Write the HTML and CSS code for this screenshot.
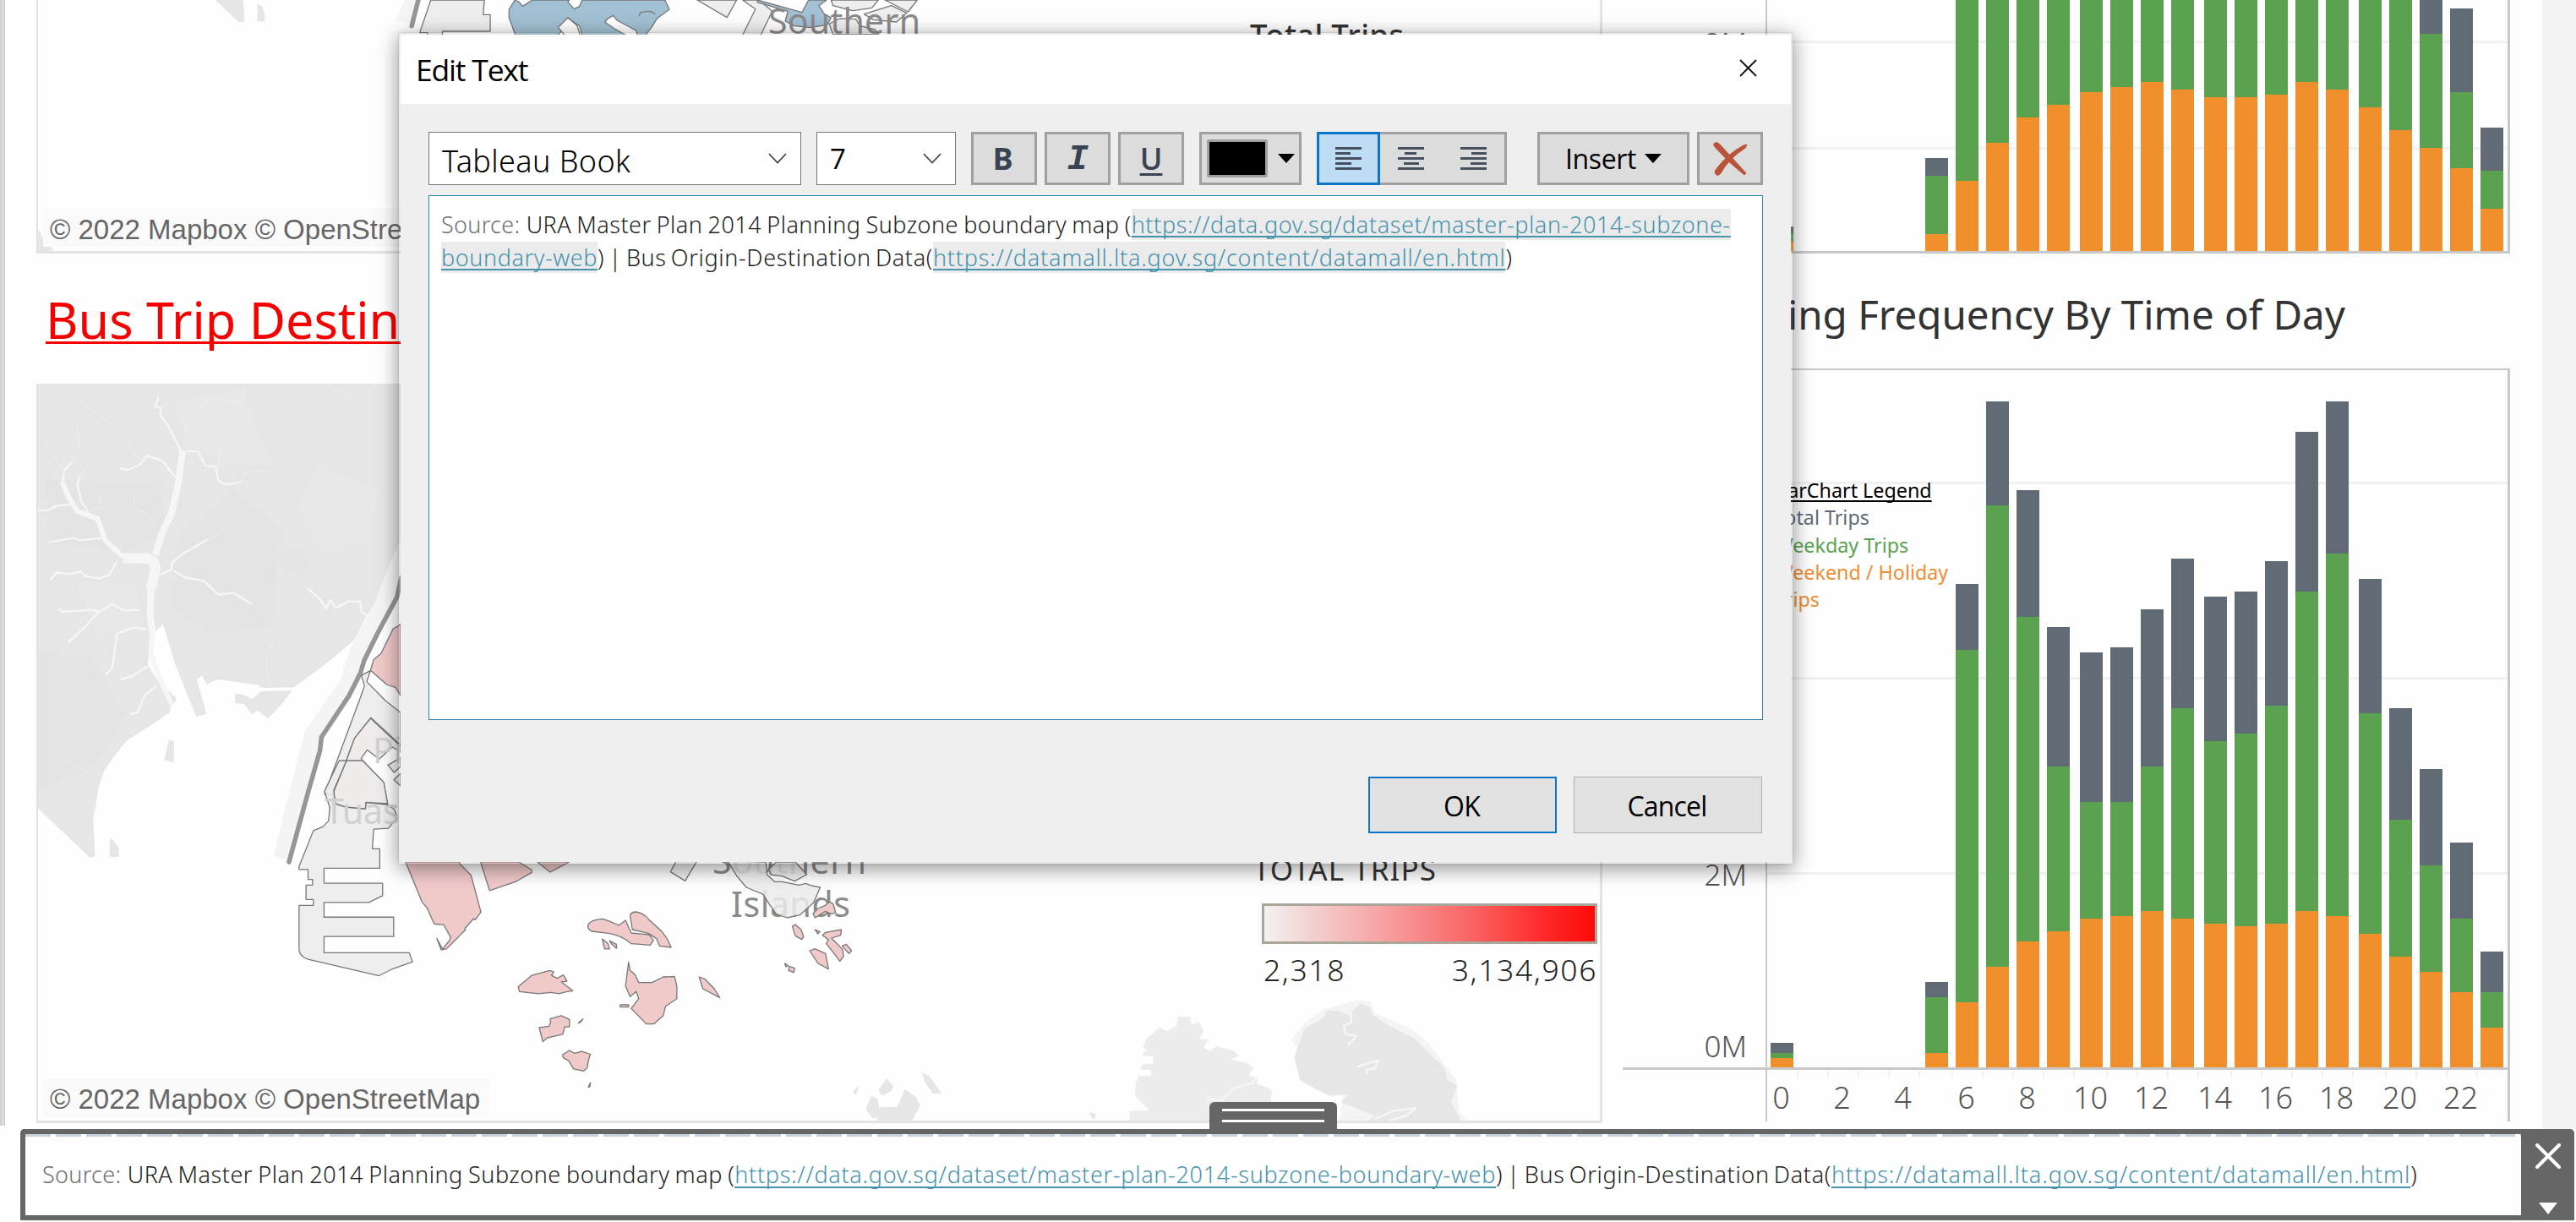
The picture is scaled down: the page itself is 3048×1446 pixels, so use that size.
FILE: index.html
```html
<!DOCTYPE html>
<html lang="en">
<head>
<meta charset="utf-8">
<title>Edit Text</title>
<link rel="stylesheet" href="styles.css">
</head>
<body>
<div class="app">
  <main class="dashboard">
    <div class="edge"></div>
    <section class="maps">
      <div class="map map-origin">
        <svg class="map-canvas" viewBox="45 0 1848 297" preserveAspectRatio="none">
          <g class="z" transform="scale(.48474 .33333)">
            <path class="land" d="M526 0H594L597 78L582 77ZM628 14L640 22L646 50V76H628Z"/>
            <path class="band" d="M988 0L965 72L1003 85L1025 0Z"/>
            <path class="causeway" d="M1021 0L1005 92"/>
            <path class="land" d="M91 818L98 822L105 850V875H125L130 887L120 892H91Z"/>
          </g>
          <g class="z" transform="translate(450 0) scale(.7653 .33333)">
            <path class="zone gray" d="M78 0L61 116H73V125H96V111H170V52H159L161 0Z"/>
            <path class="zone blue" d="M208 0L199 34V62L209 125H275L285 95L290 63L308 92L312 125H410L420 95L428 65L447 33L440 0H312L308 22L300 32L290 8L292 0H235L220 22L214 6Z"/>
            <path class="zone white" d="M290 63L275 97L285 125H309L304 90ZM347 78L352 66L360 55L366 72L395 108L398 125H380L362 102Z"/>
            <path class="zone line" d="M400 58L402 45L412 40L420 42L425 50"/>
            <path class="zone gray" d="M490 0L536 62L551 0ZM560 0L580 32L560 125H588L606 40L585 0Z"/>
            <path class="zone blue" d="M583 0L652 44L662 0H690L678 20L686 48L697 63L691 88L665 98L640 92L626 75L630 40L583 8Z"/>
            <path class="zone gray" d="M697 0L700 20L730 38L760 28L770 0ZM780 0L816 42L830 0ZM790 20L748 50L762 70L798 78L814 46ZM694 85L710 66L735 68L742 92L765 105L770 122H700Z"/>
          </g>
          <text class="place" x="909" y="40" textLength="180">Southern</text>
          <text class="place-title" x="1479" y="55" textLength="182">Total Trips</text>
        </svg>
        <div class="credit">© 2022 Mapbox © OpenStreetMap</div>
      </div>
      <h2 class="map-title">Bus Trip Destination</h2>
      <div class="map map-destination">
        <svg class="map-canvas" viewBox="45 454 1848 872" preserveAspectRatio="none">
          <g class="z" transform="translate(0 440) scale(.44643 .33333)">
            <path class="land" d="M94 42H1062V600L1040 660L990 830L970 870L940 950L880 1020L780 1120L700 1122L600 1095L575 1093L548 1110L535 1080L522 1092L548 1215L520 1225L455 1175L450 1210L400 1255L335 1310L297 1375L275 1420L262 1470L247 1589L252 1720L239 1725L94 1542Z"/>
            <path class="land-dark" d="M120 380L420 400L440 560L330 640L130 600ZM620 420L740 560L720 900L560 930L460 840L470 600ZM94 1000L240 1010L330 1220L250 1400L94 1480ZM740 640H800L820 690L770 710L735 680Z"/>
            <path class="land-light" d="M460 100L640 60L720 330L600 330L500 260ZM840 330L1000 420L980 600L850 640L790 480ZM200 740L360 760L380 900L260 940Z"/>
            <path class="sea" d="M400 940L432 895L462 1030L520 1225L548 1215L522 1092L535 1080L548 1110L575 1093L688 1112L682 1140L668 1162L645 1145L623 1142V1178L648 1180L668 1216L682 1200L710 1230L740 1190L775 1130L880 1020L920 975L880 1180L780 1500H300L300 1375L340 1310L450 1210L468 1160L415 1090L392 1040Z"/>
            <path class="land" d="M700 1134L775 1130L740 1190L710 1230L682 1202L668 1216L648 1180L623 1176V1142L645 1145L668 1162L690 1136ZM447 1307L461 1310V1386L435 1378ZM291 1652L302 1665L315 1692V1722H291Z"/>
            <g class="river">
              <path class="r20" d="M484 280L472 400L455 500L430 570L412 650M400 760L398 860L405 940"/>
              <path class="r28" d="M325 662H385Q412 665 412 700L400 770"/>
              <path class="r12" d="M405 900L400 1000L420 1080L455 1180M325 655L280 600L258 520L205 495L180 440L165 390"/>
              <path class="r6" d="M480 280L445 190L425 155L428 130L412 122L420 90M495 280L525 283L545 335H572L578 385L595 400L640 392M465 375L430 315L390 298L370 330L340 348L318 342M165 390L170 350L192 320M235 500L215 460L205 400L212 370M310 672L290 720L265 733L225 725L215 708L185 718L150 712L135 738M270 590L210 598L195 590L130 605M190 470L150 475L130 490L100 492M425 720L455 700V680L480 650L550 595M460 705L490 730L540 742L578 790L620 785L668 824M370 845L330 848L298 825L262 852L245 845L165 852L155 840M262 852L220 912L180 962M390 915L355 908L310 930L298 1050L280 1075M392 1045L350 1080L315 1094M415 1115L382 1150L365 1210L345 1215M818 770L850 810L865 840L875 810L890 838L925 815H955L958 850L975 868"/>
              <path class="r2" d="M428 50L418 90M165 50L215 110L300 190L345 260L360 305M490 270L495 230L488 205L505 160L530 130L560 92L630 108L648 85V50M640 390L650 360L690 350L755 363M580 345L582 270M192 320L210 260L205 195M212 370L238 320M170 350L130 280L110 230M355 430V480L390 510L425 555M745 890L735 930L710 990L705 1040L715 1115M866 50L915 85H940L1003 50M550 595L580 580M165 1375L200 1400L265 1430M245 490L285 480M270 470L260 440"/>
            </g>
            <path class="band" d="M1062 600L1040 660L990 830L930 975L900 1100L810 1270L765 1500L725 1720L762 1735L815 1500L852 1297L925 1150L1000 930L1062 740Z"/>
            <path class="causeway" d="M1064 730L1052 800L1000 930L965 1025L955 1070L925 1150L852 1297L848 1345L815 1500L766 1740"/>
            <path class="zone gray" d="M966 1115L957 1150L860 1500L884 1502L940 1300L983 1228L1062 1325V1210L1022 1168L972 1100L982 1060L958 1078Z"/>
            <path class="zone pale" d="M982 1230L940 1300L885 1500L878 1530L890 1540L970 1550L966 1532L1028 1534L1016 1458L957 1373L973 1342L1005 1375L1040 1332L1062 1350V1330Z"/>
            <path class="zone pink" d="M1062 895L1052 905L1042 912L1010 1000L990 1022L982 1060L1025 1110L1048 1120L1062 1150Z"/>
            <path class="zone gray" d="M1062 1370L1028 1396L1045 1422L1062 1400ZM1062 1425L1044 1448L1062 1470Z"/>
          </g>
          <text class="place faint" x="441" y="903">Pioneer</text>
          <g class="z" transform="translate(0 900) scale(.48474 .3482)">
            <path class="zone gray" d="M828 0L792 104L805 160L802 205L788 225L765 238L730 360V370H752V404H763V423H747V472H765V492H730V645Q734 668 752 675L925 731L955 710L1007 684L999 653H791V598H961V532H791V482H900L934 459V417H791V366H927V300H909L912 233L948 230L966 200L968 185L962 165L946 150L893 142L892 164L845 158L819 146L815 100L846 0Z"/>
            <path class="zone pale" d="M846 0L815 105L819 146L845 158L892 164L893 142L946 146L937 74L885 0Z"/>
            <path class="zone pink" d="M990 344L1030 480L1042 500L1060 555L1083 558L1100 600L1097 612L1080 640L1066 604L1077 643L1090 640L1136 575L1135 570L1156 537L1160 541L1174 515L1150 390L1122 350V344ZM1173 344L1195 442L1258 412L1298 380V372L1266 344ZM1311 344L1343 379L1390 344Z"/>
            <path class="zone pink" d="M1265 768L1298 730L1342 713L1352 718L1346 730L1360 740L1375 728L1384 750L1370 752L1385 768L1398 782L1382 786L1365 792L1345 788L1314 792L1268 785ZM1343 878L1370 867L1390 880V905L1378 905L1374 930L1358 935L1336 942L1325 955L1316 907L1340 903L1344 890ZM1373 1000L1390 985L1403 995L1420 988L1441 998L1437 1015L1433 1045L1425 1055L1400 1048L1388 1020L1375 1010ZM1412 892L1423 878L1418 888ZM1436 1110L1441 1095L1440 1108Z"/>
            <path class="zone pink" d="M1470 606L1484 622L1488 640H1476ZM1488 612L1505 625V638L1492 622Z"/>
          </g>
          <text class="place faint" x="384" y="975">Tuas</text>
          <text class="place" x="843" y="1034" textLength="182">Southern</text>
          <text class="place" x="865" y="1085" textLength="141">Islands</text>
          <g class="z" transform="translate(700 980) scale(.44643 .33333)">
            <path class="zone gray" d="M225 115L209 155L248 187L280 115ZM470 145L490 120H540L570 165L538 188L505 170L475 165Z"/>
            <path class="zone gray" d="M360 115L385 170L410 210L455 235L470 268L490 305L518 318L552 308L588 265L606 210L580 203L568 196L550 202L505 190H485L465 165L462 120Z"/>
            <path class="zone pink" d="M587 303L600 285L618 275L630 262L640 268L647 300L635 305L620 295L592 318ZM-10 345Q-5 325 30 322Q50 330 72 345L90 327L105 372L152 378L164 398L155 415L105 410Q80 380 45 373L0 366Q-10 360 -10 345ZM102 310Q105 297 118 297Q140 302 152 325L185 365L200 392L211 423L180 418L172 392L150 373L108 360Z"/>
            <path class="zone pink" d="M98 475L102 505L115 520L125 548L160 548L190 528L220 527L226 560V605L196 632L190 665L165 695H145L105 640L125 605L118 580L102 598L90 560ZM285 528L300 535L325 570L340 602L295 570ZM76 627H98V635H76ZM532 348L540 342L555 360L562 385L557 395L540 382ZM592 360L605 367L600 375ZM612 380L620 370L662 360L660 380L636 390L665 430L668 455L658 472L640 440L622 410L628 396ZM578 435L592 428L620 445L628 500L600 480ZM664 418L675 412L689 435L682 445ZM512 480L521 488L515 492ZM524 490L538 497L536 512L522 505Z"/>
            <path class="land" d="M692 935L710 912L700 948ZM740 950L758 960L765 1022L745 1030L727 1000ZM782 888L800 915L795 932L770 950L760 930ZM830 926L860 955L871 985L850 1037H755L765 990H810ZM875 868L895 880L928 942L905 943L885 905ZM1318 1008L1338 1015L1330 1036Z"/>
          </g>
          <g class="z" transform="translate(1300 880) scale(.5357 .3623)">
            <path class="land soft" d="M68 1236V1200L112 1198L80 1150L82 1110L88 1085L116 1084L115 1066L92 1064L98 1046L120 1045L121 1022L98 1020V1006L108 1004L98 990L105 965L135 926L150 940L172 922L175 892H202L205 918L222 908L232 940L222 965L243 966L232 990L245 1005L260 988L300 1005L310 1020L292 1030L330 1045L342 1060L330 1085L350 1090V1110L383 1130L380 1170L350 1236Z"/>
            <path class="band" d="M425 970L455 910L495 870L570 838L600 842L610 880L690 930L730 980L765 1050L790 1100L795 1200L820 1236H530L540 1150Z"/>
            <path class="land" d="M432 1025L455 930L500 892L505 870L530 872L558 890L562 870L578 848L600 862L605 885L640 920L700 965L735 1020L765 1060L770 1100L792 1115L778 1170L802 1236H595L610 1215L535 1170L553 1145L510 1150L475 1125L445 1100Z"/>
            <g class="river"><path class="r6" d="M558 885V910L542 920L545 950L570 955L550 985M570 1055L600 1042L618 1035L610 1060L590 1065L595 1080M610 1225L650 1200L700 1190L680 1215L640 1232M352 1080L340 1108L300 1125L272 1165L240 1160"/></g>
          </g>
          <text class="legend-title" x="1483" y="1042" textLength="216">TOTAL TRIPS</text>
        </svg>
        <div class="ramp">
          <div class="ramp-bar"></div>
          <div class="ramp-range"><span>2,318</span><span>3,134,906</span></div>
        </div>
        <div class="credit">© 2022 Mapbox © OpenStreetMap</div>
      </div>
    </section>
    <section class="charts">
      <div class="chart chart-top">
        <div class="axis-y"><span class="tick-2m">2M</span></div>
        <div class="plot" id="plot-boarding"></div>
      </div>
      <h2 class="chart-title">Alighting Frequency By Time of Day</h2>
      <div class="chart chart-bottom">
        <div class="axis-y"><span class="tick-2m">2M</span><span class="tick-0m">0M</span></div>
        <div class="plot" id="plot-alighting"></div>
      </div>
      <div class="axis-x" id="hours"></div>
      <div class="bar-legend">
        <div class="head">BarChart Legend</div>
        <div class="total">Total Trips</div>
        <div class="weekday">Weekday Trips</div>
        <div class="weekend">Weekend / Holiday<br>Trips</div>
      </div>
    </section>
    <div class="gutter"></div>
  </main>

  <footer class="source-panel">
    <div class="grip"><i></i><i></i></div>
    <p class="source"><span class="label">Source: </span><span class="s1">URA Master Plan 2014 Planning Subzone boundary map (</span><a class="s2">https://data.gov.sg/dataset/master-plan-2014-subzone-boundary-web</a><span class="s3">) | Bus Origin-Destination Data(</span><a class="s4">https://datamall.lta.gov.sg/content/datamall/en.html</a>)</p>
    <div class="panel-actions">
      <svg width="32" height="30" viewBox="0 0 32 30"><path d="M3 2L29 28M29 2L3 28" stroke="#fff" stroke-width="4" stroke-linecap="round"/></svg>
      <svg width="22" height="14" viewBox="0 0 22 14"><path d="M0 0H22L11 14Z" fill="#fff"/></svg>
    </div>
  </footer>

  <div class="dialog">
    <header class="dialog-bar">
      <span>Edit Text</span>
      <svg width="21" height="21" viewBox="0 0 21 21"><path d="M1 1L20 20M20 1L1 20" stroke="#111" stroke-width="1.8"/></svg>
    </header>
    <div class="dialog-body">
      <div class="toolbar">
        <div class="select font">Tableau Book<svg width="22" height="13" viewBox="0 0 22 13"><path d="M1 1L11 11.5L21 1" fill="none" stroke="#444" stroke-width="1.8"/></svg></div>
        <div class="select size">7<svg width="22" height="13" viewBox="0 0 22 13"><path d="M1 1L11 11.5L21 1" fill="none" stroke="#444" stroke-width="1.8"/></svg></div>
        <button class="tool bold">B</button>
        <button class="tool italic">I</button>
        <button class="tool under">U</button>
        <button class="tool color"><i class="swatch"></i><i class="caret"></i></button>
        <div class="align">
          <button class="on"><svg width="31" height="27" viewBox="0 0 31 27"><path d="M0 1.5H31M0 7.5H18M0 13.5H31M0 19.5H19M0 25.5H31"/></svg></button>
          <button><svg width="31" height="27" viewBox="0 0 31 27"><path d="M0 1.5H31M8 7.5H22M0 13.5H31M7 19.5H25M0 25.5H31"/></svg></button>
          <button><svg width="31" height="27" viewBox="0 0 31 27"><path d="M0 1.5H31M13 7.5H31M0 13.5H31M12 19.5H31M0 25.5H31"/></svg></button>
        </div>
        <button class="tool insert">Insert<i class="caret"></i></button>
        <button class="tool clear"><svg width="41" height="40" viewBox="0 0 41 40"><path d="M1 2Q4-1 8 3Q22 18 39 37L37 39Q18 24 3 7Q0 4 1 2ZM40 3L38 7Q18 20 9 37Q6 41 3 38Q1 36 3 33Q17 14 36 4Z" fill="#b9543a" stroke="#b9543a" stroke-width="1"/></svg></button>
      </div>
      <div class="editor"><p class="source"><span class="label">Source: </span><span class="s1">URA Master Plan 2014 Planning Subzone boundary map (</span><a class="s2">https://data.gov.sg/dataset/master-plan-2014-subzone-</a><br><a class="s2">boundary-web</a><span class="s3">) | Bus Origin-Destination Data(</span><a class="s4">https://datamall.lta.gov.sg/content/datamall/en.html</a>)</p></div>
      <div class="dialog-actions"><button class="ok">OK</button><button class="cancel">Cancel</button></div>
    </div>
  </div>
</div>
<script src="charts.js"></script>
</body>
</html>
```
FILE: styles.css
```css
* { box-sizing: border-box; }
body { margin: 0; background: #fefefe; font-family: "Noto Sans", sans-serif; color: #333; }
h2, p { margin: 0; font-weight: 400; }
button { font: inherit; color: inherit; padding: 0; margin: 0; }
.app { position: relative; width: 3048px; height: 1446px; overflow: hidden; }

/* dashboard */
.dashboard { display: flex; height: 1336px; }
.edge { width: 6px; height: 1332px; background: linear-gradient(90deg, #d2d2d2 3px, #ececec 3px 4px, #cfcfcf 4px); }
.maps { width: 1853px; margin-left: 37px; }
.map { position: relative; border: solid #e3e3e3; border-width: 0 3px 3px 2px; overflow: hidden; }
.map-origin { height: 300px; }
.map-destination { height: 875px; }
.map-canvas { display: block; width: 100%; height: 100%; }
.map-title { height: 154px; padding: 17px 0 0 11px; font-size: 59.3px; line-height: 122px; color: #f60000; white-space: nowrap; text-decoration: underline 3px; text-underline-offset: 3px; text-decoration-skip-ink: none; }
.credit { position: absolute; left: 6px; bottom: 5px; width: 528px; height: 45px; padding-left: 8px; background: #fafafa; font: 33px/49px "Liberation Sans", sans-serif; color: #666; white-space: nowrap; }
.z path { vector-effect: non-scaling-stroke; }
.land { fill: #e6e6e6; }
.land-dark { fill: #e4e4e4; }
.land-light { fill: #e8e8e8; }
.land.soft { fill: #ececec; }
.sea { fill: #fefefe; }
.band { fill: #f4f4f4; }
.causeway { fill: none; stroke: #969696; stroke-width: 5.5; stroke-linecap: round; stroke-linejoin: round; }
.river path { fill: none; stroke: #f6f6f6; stroke-linejoin: round; }
.r28 { stroke-width: 12; } .r20 { stroke-width: 8; } .r12 { stroke-width: 6; } .river .r6 { stroke-width: 2.4; } .river .r2 { stroke-width: 1; stroke: #efefef; }
.zone { stroke: #777; stroke-width: 1.3; stroke-linejoin: round; }
.line { fill: none; }
.gray { fill: #ebebeb; fill-opacity: .85; }
.white { fill: #fff; }
.pale { fill: #efebeb; }
.pink { fill: #f0c9c9; }
.blue { fill: #a1c0d3; }
.place { font-size: 41px; fill: #8a8a8a; }
.faint { fill: #d2cfd0; }
.place-title { font-size: 36.5px; font-weight: 500; fill: #333; }
.legend-title { font-size: 35px; fill: #333; }
.ramp { position: absolute; left: 1448px; top: 615px; width: 397px; }
.ramp-bar { height: 48px; border: 3px solid #aaa799; background: linear-gradient(90deg, #f4f2f2, #f3cfcf 15%, #f79d9d 38%, #fa6565 62%, #ff2a2a 84%, #ff0a0a); }
.ramp-range { display: flex; justify-content: space-between; padding: 0 2px; font-size: 35.5px; font-weight: 300; line-height: 60px; letter-spacing: 1.6px; margin-right: -2px; color: #222; }

/* charts */
.charts { position: relative; width: 1050px; margin-left: 24px; }
.chart { display: flex; }
.chart-top { height: 300px; }
.chart-bottom { height: 830px; }
.axis-y { width: 169px; padding-right: 22px; display: flex; flex-direction: column; align-items: flex-end; font-size: 35px; font-weight: 300; line-height: 48px; color: #555; }
.chart-top .tick-2m { margin-top: 27px; }
.chart-bottom .tick-2m { margin-top: 575px; }
.chart-bottom .tick-0m { margin-top: 155px; }
.chart-bottom .axis-y { border-bottom: 3px solid #c8c8c8; }
.plot { width: 881px; display: flex; align-items: flex-end; border: solid #c8c8c8; border-width: 0 3px 3px 2px; background-repeat: no-repeat; }
.chart-top .plot { background-image: linear-gradient(#f1f1f1, #f1f1f1), linear-gradient(#f1f1f1, #f1f1f1); background-size: 100% 3px; background-position: 0 48px, 0 174px; }
.chart-bottom .plot { border-top-width: 2px; background-image: linear-gradient(#f1f1f1, #f1f1f1), linear-gradient(#f1f1f1, #f1f1f1), linear-gradient(#f1f1f1, #f1f1f1); background-size: 100% 3px; background-position: 0 132px, 0 363px, 0 594px; }
.hour { flex: none; width: 36px; padding-left: 4px; }
.hour.wide { width: 39px; padding-left: 7px; }
.seg { width: 27px; }
.total-seg { background: #616b75; }
.weekday-seg { background: #5aa250; }
.weekend-seg { background: #f28f2d; }
.chart-title { height: 136px; padding-top: 40px; font-size: 47.5px; line-height: 64px; text-align: right; padding-right: 195px; white-space: nowrap; }
.axis-x { display: flex; margin-left: 169px; height: 61px; width: 881px; border: solid #c8c8c8; border-width: 0 3px 0 2px; font-size: 36px; font-weight: 300; color: #555; }
.slot { flex: none; width: 36px; display: flex; justify-content: center; line-height: 49px; padding: 8px 3px 0 0; position: relative; }
.slot.wide { width: 39px; padding-right: 0; }
.slot::after { content: ""; position: absolute; right: -1px; top: 1px; width: 2px; height: 9px; background: #f1f1f1; }
.slot:last-child::after { display: none; }
.bar-legend { position: absolute; left: 180px; top: 564px; font-size: 23.3px; line-height: 32.3px; white-space: nowrap; }
.head { color: #000; text-decoration: underline 1.5px; text-underline-offset: 3px; text-decoration-skip-ink: none; }
.total { color: #616b75; }
.weekday { color: #5aa250; }
.weekend { color: #ee8d33; }
.gutter { margin-left: auto; width: 40px; background: #f3f3f3; }

/* source zone */
.source-panel { position: relative; display: flex; justify-content: space-between; width: 3022px; height: 108px; margin-left: 24px; border: 6px solid #666; border-width: 6px 0 6px 6px; border-radius: 5px 5px 0 0; background: repeating-linear-gradient(90deg, #c8cfdd 0 30px, #fff 30px 36px) 0 0 / 100% 3px no-repeat, #fefefe; }
.grip { position: absolute; left: 1401px; top: -38px; width: 151px; height: 33px; padding: 8px 15px; display: grid; gap: 9px; border-radius: 6px 6px 0 0; background: #666; }
.grip i { height: 3px; background: #fff; }
.source { font-size: 27px; font-weight: 300; white-space: nowrap; color: #222; }
.source-panel .source { padding-left: 20px; line-height: 95px; }
.label { color: #707070; letter-spacing: .3px; }
.s1 { letter-spacing: .5px; word-spacing: -1.2px; } .s2 { letter-spacing: .7px; } .s3 { letter-spacing: .65px; word-spacing: -2.5px; } .s4 { letter-spacing: .93px; }
.source a { color: #4793ae; text-decoration: underline 1.5px; text-underline-offset: 4px; text-decoration-skip-ink: none; }
.panel-actions { width: 63px; margin-bottom: -6px; padding: 11px 0 7px; display: flex; flex-direction: column; align-items: center; justify-content: space-between; background: #666; }

/* dialog */
.dialog { position: absolute; left: 471px; top: 38px; width: 1651px; height: 985px; display: flex; flex-direction: column; border: 3px solid rgba(130,130,130,.15); background: #efefef; background-clip: padding-box; box-shadow: 0 5px 22px rgba(0,0,0,.42); font-family: "Open Sans", sans-serif; color: #000; }
.dialog-bar { height: 82px; padding: 0 40px 0 18px; display: flex; align-items: center; justify-content: space-between; background: #fff; font-size: 35.5px; letter-spacing: -1.2px; }
.dialog-bar svg { margin-top: -4px; }
.dialog-body { flex: 1; padding: 33px 33px 0; }
.toolbar { display: flex; height: 63px; }
.select { display: flex; align-items: center; justify-content: space-between; height: 63px; border: 1.5px solid #777; background: #fff; padding: 0 16px 0 15px; font-size: 36px; }
.font { width: 441px; font-family: "Noto Sans", sans-serif; font-weight: 300; letter-spacing: .4px; padding-top: 6px; }
.font svg { margin-top: -6px; }
.size { width: 165px; margin-left: 18px; font-size: 33px; }
.tool { display: flex; align-items: center; justify-content: center; width: 78px; margin-left: 9px; border: 3px solid #a0a0a0; background: #dcdcdc; color: #3a4352; font-weight: 700; font-size: 36px; }
.bold { margin-left: 18px; padding-right: 3px; }
.italic { font-family: "Liberation Mono", monospace; font-style: italic; font-size: 42px; padding-top: 3px; }
.under { font-weight: 600; text-decoration: underline 3px; text-underline-offset: 4px; }
.color { width: 121px; margin-left: 18px; justify-content: space-between; padding: 0 5px 0 6px; }
.swatch { width: 72px; height: 45px; border: 3px solid #a0a0a0; border-radius: 2px; background: #000; }
.caret { width: 20px; height: 11px; background: #000; clip-path: polygon(0 0, 100% 0, 50% 100%); }
.align { display: flex; width: 225px; margin-left: 18px; background: #dcdcdc; border: 3px solid #a0a0a0; border-left: 0; }
.align button { flex: 1; border: 0; background: none; display: flex; align-items: center; justify-content: center; }
.align .on { flex: none; width: 75px; margin: -3px 0; border: 3px solid #0b76c8; background: #bedcf4; }
.align path { stroke: #47505f; stroke-width: 3; }
.insert { width: 180px; margin-left: 36px; gap: 10px; font-size: 32px; font-weight: 400; letter-spacing: -.4px; color: #000; }
.editor { height: 621px; margin-top: 12px; padding: 14px 14px; border: 1.5px solid #2f83b2; background: #fff; font-family: "Noto Sans", sans-serif; }
.editor .source { line-height: 39px; }
.editor .source a { background: #ebebeb; text-decoration-thickness: 2px; text-underline-offset: 3px; }
.editor .s1 { letter-spacing: .45px; }
.editor .s2 { letter-spacing: .6px; }
.editor .s4 { letter-spacing: .78px; }
.dialog-actions { display: flex; justify-content: flex-end; gap: 20px; margin: 67px 1px 0 0; }
.dialog-actions button { width: 223px; height: 67px; font-size: 32px; letter-spacing: -.8px; border: 1.5px solid #adadad; background: #e1e1e1; padding: 2px 2px 0 0; }
.dialog-actions .ok { border: 2px solid #0b76c8; }
```
FILE: charts.js
```js
// Segment tops per hour, in plot pixels: [total, weekday, weekend].
const boarding = {
  base: 297,
  tops: { 0: [268, 277, 286], 5: [187, 208, 277], 6: [0, 0, 214], 7: [0, 0, 169], 8: [0, 0, 139], 9: [0, 0, 124],
    10: [0, 0, 109], 11: [0, 0, 103], 12: [0, 0, 97], 13: [0, 0, 106], 14: [0, 0, 115], 15: [0, 0, 115], 16: [0, 0, 112],
    17: [0, 0, 97], 18: [0, 0, 106], 19: [0, 0, 127], 20: [0, 0, 154], 21: [0, 40, 175], 22: [10, 109, 199], 23: [151, 202, 247] }
};
const alighting = {
  base: 1263,
  tops: { 0: [1234, 1246, 1252], 5: [1162, 1180, 1246], 6: [691, 769, 1186], 7: [475, 598, 1144], 8: [580, 730, 1114],
    9: [742, 907, 1102], 10: [772, 949, 1087], 11: [766, 949, 1084], 12: [721, 907, 1078], 13: [661, 838, 1087],
    14: [706, 877, 1093], 15: [700, 868, 1096], 16: [664, 835, 1093], 17: [511, 700, 1078], 18: [475, 655, 1084],
    19: [685, 844, 1105], 20: [838, 970, 1132], 21: [910, 1024, 1150], 22: [997, 1087, 1174], 23: [1126, 1174, 1216] }
};
const wide = [5, 10, 14, 19];

function draw(id, series) {
  let html = "";
  for (let h = 0; h < 24; h++) {
    html += `<div class="hour${wide.includes(h) ? " wide" : ""}">`;
    const t = series.tops[h];
    if (t) {
      html += `<div class="seg total-seg" style="height:${t[1] - t[0]}px"></div>`;
      html += `<div class="seg weekday-seg" style="height:${t[2] - t[1]}px"></div>`;
      html += `<div class="seg weekend-seg" style="height:${series.base - t[2]}px"></div>`;
    }
    html += "</div>";
  }
  document.getElementById(id).innerHTML = html;
}
draw("plot-boarding", boarding);
draw("plot-alighting", alighting);

let hours = "";
for (let h = 0; h < 24; h++) {
  hours += `<div class="slot${wide.includes(h) ? " wide" : ""}">${h % 2 ? "" : h}</div>`;
}
document.getElementById("hours").innerHTML = hours;
```
